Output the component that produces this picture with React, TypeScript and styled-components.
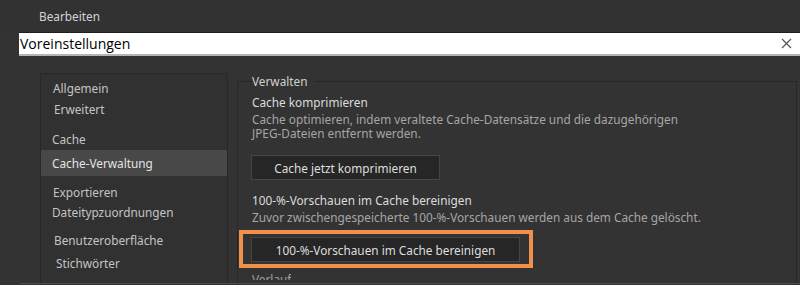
import React from 'react';
import styled, { createGlobalStyle } from 'styled-components';

const GlobalStyle = createGlobalStyle`
    html, body {
        margin: 0;
        padding: 0;
        background: #333333;
        overflow: hidden;
    }
    body {
        font-family: "Noto Sans", "Open Sans", sans-serif;
    }
`;

const Page = styled.div`
    width: 800px;
    height: 285px;
    background: #333333;
    display: flex;
    flex-direction: column;
    overflow: hidden;
    position: relative;
`;

const MenuBar = styled.div`
    flex-shrink: 0;
    height: 32px;
    padding-left: 39px;
    display: flex;
    align-items: center;
    font-size: 11.8px;
    color: #d4d4d4;
    background: #323232;
`;

const TitleBar = styled.div`
    flex-shrink: 0;
    margin-left: 19px;
    height: 21px;
    background: #ffffff;
    border-top: 1px solid #1e1e1e;
    border-bottom: 2px solid #b4b4b4;
    display: flex;
    align-items: center;
    justify-content: space-between;
    padding: 0 8px 0 1px;
    font-family: "Open Sans", "Noto Sans", sans-serif;
    font-size: 14px;
    color: #000;
`;

const CloseGlyph = styled.svg`
    width: 11px;
    height: 11px;
`;

const Body = styled.div`
    flex: 1;
    min-height: 0;
    display: flex;
    gap: 9px;
    padding: 17px 3px 0 40px;
`;

const Sidebar = styled.nav`
    width: 186px;
    border: 1px solid #282828;
    border-bottom: none;
    background: #313131;
    padding-top: 3px;
    display: flex;
    flex-direction: column;
`;

const NavGroup = styled.div<{ $gap?: number; $after: number }>`
    display: flex;
    flex-direction: column;
    gap: ${p => p.$gap ?? 0}px;
    margin-bottom: ${p => p.$after}px;
`;

const NavItem = styled.div<{ $active?: boolean; $indent?: number; $h?: number }>`
    height: ${p => (p.$active ? 26 : p.$h ?? 21)}px;
    flex-shrink: 0;
    display: flex;
    align-items: center;
    padding-left: ${p => 11 + (p.$indent ?? 0)}px;
    font-size: 11.8px;
    color: ${p => (p.$active ? '#e4e4e4' : '#c4c4c4')};
    background: ${p => (p.$active ? '#484848' : 'transparent')};
`;

const Group = styled.fieldset`
    flex: 1;
    margin: 0;
    padding: 6px 14px 0 14px;
    border: 1px solid #282828;
    border-bottom: none;
    min-width: 0;
`;

const Legend = styled.legend`
    padding: 0 6px 0 0;
    font-size: 11.8px;
    color: #d0d0d0;
`;

const Section = styled.div`
    display: flex;
    flex-direction: column;
    align-items: flex-start;
    margin-bottom: 13px;
`;

const Heading = styled.div`
    font-size: 11.8px;
    color: #dcdcdc;
    line-height: 15px;
`;

const Description = styled.div`
    font-size: 11.8px;
    color: #a6a6a6;
    line-height: 14px;
    margin-top: 2px;
`;

const Highlight = styled.div`
    box-sizing: border-box;
    width: 294px;
    margin: 6px 0 0 -13px;
    border: 4px solid #f0904a;
    padding: 3px 9px 2px 8px;
`;

const Button = styled.button<{ $wide?: boolean }>`
    display: block;
    width: ${p => (p.$wide ? '269px' : '189px')};
    height: 25px;
    margin-top: ${p => (p.$wide ? '0' : '15px')};
    margin-left: ${p => (p.$wide ? '0' : '-1px')};
    background: #262626;
    border: 1px solid #454545;
    color: #dedede;
    font-family: "Noto Sans", "Open Sans", sans-serif;
    font-size: 11.8px;
    padding: 0;
`;

const Cut = styled.div`
    height: 8px;
    margin-top: 4px;
    font-size: 11.8px;
    line-height: 15px;
    color: #a0a0a0;
    overflow: hidden;
`;

const BottomRule = styled.div`
    position: absolute;
    left: 20px;
    right: 0;
    bottom: 1px;
    height: 1px;
    background: #4a4a4a;
`;

const App: React.FC = () => {
    return (
        <>
            <GlobalStyle />
            <Page>
                <MenuBar>Bearbeiten</MenuBar>
                <TitleBar>
                    <span>Voreinstellungen</span>
                    <CloseGlyph viewBox="0 0 11 11">
                        <path d="M1 1 L10 10 M10 1 L1 10" stroke="#555" strokeWidth="1.2" />
                    </CloseGlyph>
                </TitleBar>
                <Body>
                    <Sidebar>
                        <NavGroup $after={9}>
                            <NavItem $indent={1}>Allgemein</NavItem>
                            <NavItem $indent={2}>Erweitert</NavItem>
                        </NavGroup>
                        <NavGroup $gap={1} $after={6}>
                            <NavItem>Cache</NavItem>
                            <NavItem $active>Cache-Verwaltung</NavItem>
                        </NavGroup>
                        <NavGroup $after={7}>
                            <NavItem $indent={1} $h={20}>Exportieren</NavItem>
                            <NavItem $h={20}>Dateitypzuordnungen</NavItem>
                        </NavGroup>
                        <NavGroup $gap={2} $after={0}>
                            <NavItem $indent={2}>Benutzeroberfläche</NavItem>
                            <NavItem $indent={4}>Stichwörter</NavItem>
                        </NavGroup>
                    </Sidebar>
                    <Group>
                        <Legend>Verwalten</Legend>
                        <Section>
                            <Heading>Cache komprimieren</Heading>
                            <Description>
                                Cache optimieren, indem veraltete Cache-Datensätze und die dazugehörigen
                                <br />
                                JPEG-Dateien entfernt werden.
                            </Description>
                            <Button>Cache jetzt komprimieren</Button>
                        </Section>
                        <Section>
                            <Heading>100-%-Vorschauen im Cache bereinigen</Heading>
                            <Description>
                                Zuvor zwischengespeicherte 100-%-Vorschauen werden aus dem Cache gelöscht.
                            </Description>
                            <Highlight>
                                <Button $wide>100-%-Vorschauen im Cache bereinigen</Button>
                            </Highlight>
                            <Cut>Verlauf</Cut>
                        </Section>
                    </Group>
                </Body>
                <BottomRule />
            </Page>
        </>
    );
};

export default App;
